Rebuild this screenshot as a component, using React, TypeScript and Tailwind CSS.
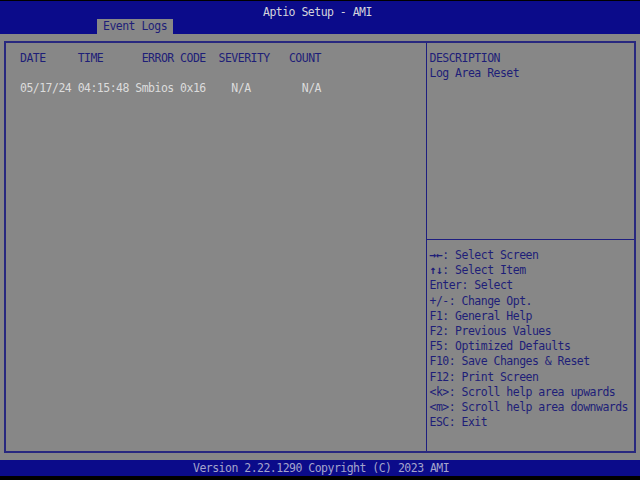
const helpLines: [string, string][] = [
  ['→←', ': Select Screen'],
  ['↑↓', ': Select Item'],
  ['', 'Enter: Select'],
  ['', '+/-: Change Opt.'],
  ['', 'F1: General Help'],
  ['', 'F2: Previous Values'],
  ['', 'F5: Optimized Defaults'],
  ['', 'F10: Save Changes & Reset'],
  ['', 'F12: Print Screen'],
  ['', '<k>: Scroll help area upwards'],
  ['', '<m>: Scroll help area downwards'],
  ['', 'ESC: Exit'],
]

export default function App() {
  return (
    <div
      className="w-[640px] h-[480px] bg-black flex flex-col text-[11.5px] leading-[15.2px] tracking-[-0.52px] whitespace-pre"
      style={{ fontFamily: '"DejaVu Sans Mono", "Liberation Mono", monospace' }}
    >
      {/* header bar */}
      <div className="mt-[1px] h-[33px] bg-[#0b0b8a] flex flex-col">
        <div className="h-[18px] pt-[4px] pl-[263px] text-[#d4d4dc]">Aptio Setup - AMI</div>
        <div className="h-[15px] flex">
          <div className="ml-[97px] w-[76px] h-[15px] bg-[#878787] pl-[6px] text-[#1e1e78]">Event Logs</div>
        </div>
      </div>

      {/* main area */}
      <div className="h-[426px] bg-[#878787] pt-[7px] px-[4px]">
        <div className="h-[412px] border-2 border-[#28287f] flex">
          <div className="w-[421px] border-r-[1.5px] border-[#1e1e80] pl-[14px] pt-[8px]">
            <div className="text-[#1e1e78]">DATE     TIME      ERROR CODE  SEVERITY   COUNT</div>
            <div className="h-[15.2px]" />
            <div className="text-[#dcdcdc]">05/17/24 04:15:48 Smbios 0x16    N/A        N/A</div>
          </div>
          <div className="flex-1 flex flex-col text-[#1e1e78]">
            <div className="h-[197px] border-b-[1.5px] border-[#1e1e80] pl-[2.5px] pt-[8px]">
              <div>DESCRIPTION</div>
              <div>Log Area Reset</div>
            </div>
            <div className="pl-[2.5px] pt-[8px]">
              {helpLines.map(([arrows, text]) => (
                <div key={text}>
                  {arrows && <span className="font-bold">{arrows}</span>}
                  {text}
                </div>
              ))}
            </div>
          </div>
        </div>
      </div>

      {/* footer */}
      <div className="h-[16px] bg-[#0b0b8a] pt-[1px] pl-[193px] text-[#a4a4cc]">Version 2.22.1290 Copyright (C) 2023 AMI</div>
    </div>
  )
}
